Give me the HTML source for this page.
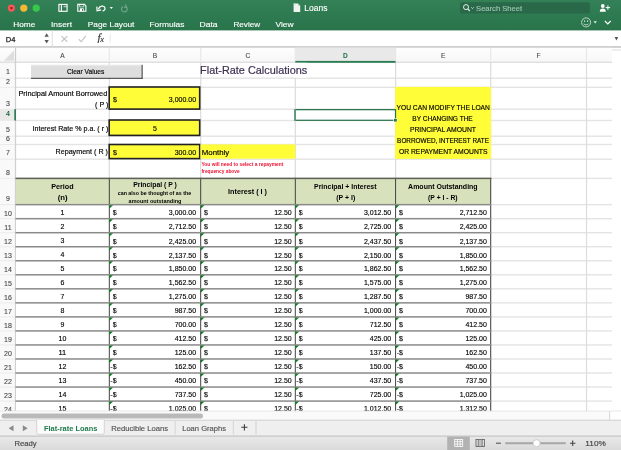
<!DOCTYPE html>
<html><head><meta charset="utf-8"><title>Loans</title>
<style>
html,body{margin:0;padding:0;background:#fff;}
body{width:621px;height:450px;overflow:hidden;}
svg{display:block;font-family:"Liberation Sans",sans-serif;will-change:transform;}
.s{font-family:"Liberation Serif",serif;font-style:italic;}
</style></head><body>
<svg width="621" height="450" viewBox="0 0 621 450">
<defs><linearGradient id="g" x1="0" y1="0" x2="0" y2="1"><stop offset="0" stop-color="#348057"/><stop offset=".55" stop-color="#2e7a50"/><stop offset="1" stop-color="#29744a"/></linearGradient>
<linearGradient id="h" x1="0" y1="0" x2="0" y2="1"><stop offset="0" stop-color="#fefefe"/><stop offset="1" stop-color="#f7f7f7"/></linearGradient><linearGradient id="sb" x1="0" y1="0" x2="0" y2="1"><stop offset="0" stop-color="#e9e9e9"/><stop offset="1" stop-color="#dadada"/></linearGradient></defs>
<rect width="621" height="450" fill="#fff"/>
<rect x="0.00" y="0.00" width="621.00" height="30.40" fill="url(#g)"/>
<circle cx="11.4" cy="8.1" r="3.65" fill="#f4575a"/>
<circle cx="23.8" cy="8.1" r="3.65" fill="#f6b737"/>
<circle cx="36.2" cy="8.1" r="3.65" fill="#36c84b"/>
<circle cx="11.4" cy="8.1" r="1.15" fill="#8b1411"/>
<g fill="none" stroke="#fff" stroke-width="1.1">
<rect x="58.9" y="4.4" width="8.2" height="6.9"/><path d="M61.4 4.4v6.9" /><path d="M63.6 6.5h3.5" stroke-width="1.6" stroke-opacity=".55"/>
<path d="M77.8 4.4h6.6l1.5 1.5v5.4h-8.1z"/><path d="M79.6 4.6v2.3h4.2v-2.3" stroke-width=".8" stroke-opacity=".8"/>
<path d="M98.4 9.2c1.2-3.6 5.6-4 6.5-1.3c.5 1.5-.6 2.8-2.2 3.1" stroke-width="1.3"/>
<path d="M96.8 6.6l.3 4.2l4-.9" stroke-width="1.2"/>
</g>
<rect x="79.9" y="8.3" width="3.8" height="3" fill="#fff"/><rect x="82" y="9" width="1" height="1.8" fill="#2f7d52"/>
<path d="M109.7 7h3.2l-1.6 2z" fill="#fff"/>
<g fill="none" stroke="#76aa90" stroke-width="1.05"><path d="M123 6.5a2.9 2.9 0 1 0 3 .2"/><path d="M125.4 4.4l1 2.4l-2.5.6"/></g>
<path d="M293.6 3.5h4.4l2.2 2.2v6.4h-6.6z" fill="#f1f3f1"/><path d="M293.6 3.5h2v1.2h-2z" fill="#bfe0b5"/><path d="M298 3.5v2.2h2.2z" fill="#a9c9b6"/>
<rect x="460" y="2.2" width="130" height="11.4" rx="2.2" fill="#29694a"/>
<circle cx="466" cy="7.1" r="2.5" fill="none" stroke="#e4eee8" stroke-width="1"/><path d="M467.8 9l2 2" stroke="#e4eee8" stroke-width="1.1"/>
<path d="M471.2 7.3l1.3 1.3l1.3-1.3" fill="none" stroke="#e4eee8" stroke-width=".8"/>
<circle cx="602.8" cy="6" r="1.9" fill="#fff"/><path d="M599.8 11.7c-.3-4.2 6.3-4.2 6 0z" fill="#fff"/><path d="M605.7 7.6h4.4M607.9 5.4v4.4" stroke="#fff" stroke-width="1"/>
<circle cx="586.1" cy="22.4" r="4.5" fill="none" stroke="#dfeae4" stroke-width=".8"/><rect x="584.1" y="20.4" width="1" height="1.5" fill="#dfeae4"/><rect x="587.1" y="20.4" width="1" height="1.5" fill="#dfeae4"/><path d="M583.7 23.8c1.2 1.4 3.6 1.4 4.8 0" fill="none" stroke="#dfeae4" stroke-width=".8"/>
<path d="M593.5 21.2h3.4l-1.7 2.2z" fill="#e6efe9"/>
<path d="M604.9 21l2.9 2.9l2.9-2.9" fill="none" stroke="#fff" stroke-width="1.2"/>
<text x="304.23" y="11.40" font-size="8.2" fill="#fff" stroke="#fff" stroke-width="0.12" textLength="23.2" lengthAdjust="spacingAndGlyphs">Loans</text>
<text x="476.07" y="10.80" font-size="7.6" fill="#9cc3ad" stroke="#9cc3ad" stroke-width="0.15" textLength="46.0" lengthAdjust="spacingAndGlyphs">Search Sheet</text>
<text x="13.23" y="26.80" font-size="8.1" fill="#fff" stroke="#fff" stroke-width="0.12" textLength="22.1" lengthAdjust="spacingAndGlyphs">Home</text>
<text x="50.93" y="26.80" font-size="8.1" fill="#fff" stroke="#fff" stroke-width="0.12" textLength="21.1" lengthAdjust="spacingAndGlyphs">Insert</text>
<text x="87.83" y="26.80" font-size="8.1" fill="#fff" stroke="#fff" stroke-width="0.12" textLength="46.6" lengthAdjust="spacingAndGlyphs">Page Layout</text>
<text x="149.43" y="26.80" font-size="8.1" fill="#fff" stroke="#fff" stroke-width="0.12" textLength="35.0" lengthAdjust="spacingAndGlyphs">Formulas</text>
<text x="199.43" y="26.80" font-size="8.1" fill="#fff" stroke="#fff" stroke-width="0.12" textLength="18.2" lengthAdjust="spacingAndGlyphs">Data</text>
<text x="233.43" y="26.80" font-size="8.1" fill="#fff" stroke="#fff" stroke-width="0.12" textLength="26.7" lengthAdjust="spacingAndGlyphs">Review</text>
<text x="275.43" y="26.80" font-size="8.1" fill="#fff" stroke="#fff" stroke-width="0.12" textLength="18.2" lengthAdjust="spacingAndGlyphs">View</text>
<rect x="0.00" y="46.15" width="621.00" height="1.70" fill="#c9c9c9"/>
<path d="M46.65 33.2l2.15 3.5h-4.3zM46.65 43.5l2.15-3.5h-4.3z" fill="#5a5a5a"/>
<rect x="51.70" y="30.60" width="1.00" height="15.60" fill="#dedede"/>
<rect x="109.70" y="34.20" width="1.00" height="8.20" fill="#e6e6e6"/>
<path d="M61.5 36.1l5.7 5.7M67.2 36.1l-5.7 5.7" stroke="#c6c6c6" stroke-width="1.25" fill="none"/>
<path d="M78.8 39.3l2.4 2.3l4.7-5.8" stroke="#c6c6c6" stroke-width="1.25" fill="none"/>
<path d="M614.6 37h3.6l-1.8 3.4z" fill="#505050"/>
<text x="5.87" y="42.00" font-size="7.6" fill="#222" stroke="#222" stroke-width="0.25" textLength="9.7" lengthAdjust="spacingAndGlyphs">D4</text>
<text x="97.4" y="41" font-size="11.4" fill="#3c3c3c" stroke="#3c3c3c" stroke-width=".2" class="s">f<tspan font-size="8.4" dx="-0.2" dy="0.5">x</tspan></text>
<rect x="0.00" y="47.80" width="612.00" height="14.00" fill="url(#h)"/>
<rect x="295.30" y="47.80" width="100.30" height="14.00" fill="#e9e9e9"/>
<rect x="612.00" y="49.50" width="9.00" height="1.00" fill="#dedede"/>
<path d="M14 50.6v10.2h-10.2z" fill="#dedede"/>
<rect x="0.00" y="62.70" width="15.00" height="348.30" fill="#f9f9f9"/>
<rect x="0.00" y="109.20" width="15.50" height="11.30" fill="#e9e9e9"/>
<rect x="0.00" y="61.70" width="612.00" height="1.00" fill="#d2d2d2"/>
<rect x="15.50" y="77.50" width="596.50" height="1.40" fill="#e4e4e4"/>
<rect x="0.00" y="77.70" width="15.50" height="1.00" fill="#ebebeb"/>
<rect x="15.50" y="86.60" width="596.50" height="1.40" fill="#e4e4e4"/>
<rect x="0.00" y="86.80" width="15.50" height="1.00" fill="#ebebeb"/>
<rect x="15.50" y="108.50" width="596.50" height="1.40" fill="#e4e4e4"/>
<rect x="0.00" y="108.70" width="15.50" height="1.00" fill="#ebebeb"/>
<rect x="15.50" y="119.80" width="596.50" height="1.40" fill="#e4e4e4"/>
<rect x="0.00" y="120.00" width="15.50" height="1.00" fill="#ebebeb"/>
<rect x="15.50" y="135.50" width="596.50" height="1.40" fill="#e4e4e4"/>
<rect x="0.00" y="135.70" width="15.50" height="1.00" fill="#ebebeb"/>
<rect x="15.50" y="143.80" width="596.50" height="1.40" fill="#e4e4e4"/>
<rect x="0.00" y="144.00" width="15.50" height="1.00" fill="#ebebeb"/>
<rect x="15.50" y="158.50" width="596.50" height="1.40" fill="#e4e4e4"/>
<rect x="0.00" y="158.70" width="15.50" height="1.00" fill="#ebebeb"/>
<rect x="15.50" y="177.70" width="596.50" height="1.40" fill="#e4e4e4"/>
<rect x="0.00" y="177.90" width="15.50" height="1.00" fill="#ebebeb"/>
<rect x="15.50" y="203.95" width="596.50" height="1.40" fill="#e4e4e4"/>
<rect x="0.00" y="204.15" width="15.50" height="1.00" fill="#ebebeb"/>
<rect x="15.50" y="217.98" width="596.50" height="1.40" fill="#e4e4e4"/>
<rect x="0.00" y="218.18" width="15.50" height="1.00" fill="#ebebeb"/>
<rect x="15.50" y="232.01" width="596.50" height="1.40" fill="#e4e4e4"/>
<rect x="0.00" y="232.21" width="15.50" height="1.00" fill="#ebebeb"/>
<rect x="15.50" y="246.04" width="596.50" height="1.40" fill="#e4e4e4"/>
<rect x="0.00" y="246.24" width="15.50" height="1.00" fill="#ebebeb"/>
<rect x="15.50" y="260.07" width="596.50" height="1.40" fill="#e4e4e4"/>
<rect x="0.00" y="260.27" width="15.50" height="1.00" fill="#ebebeb"/>
<rect x="15.50" y="274.10" width="596.50" height="1.40" fill="#e4e4e4"/>
<rect x="0.00" y="274.30" width="15.50" height="1.00" fill="#ebebeb"/>
<rect x="15.50" y="288.13" width="596.50" height="1.40" fill="#e4e4e4"/>
<rect x="0.00" y="288.33" width="15.50" height="1.00" fill="#ebebeb"/>
<rect x="15.50" y="302.16" width="596.50" height="1.40" fill="#e4e4e4"/>
<rect x="0.00" y="302.36" width="15.50" height="1.00" fill="#ebebeb"/>
<rect x="15.50" y="316.19" width="596.50" height="1.40" fill="#e4e4e4"/>
<rect x="0.00" y="316.39" width="15.50" height="1.00" fill="#ebebeb"/>
<rect x="15.50" y="330.22" width="596.50" height="1.40" fill="#e4e4e4"/>
<rect x="0.00" y="330.42" width="15.50" height="1.00" fill="#ebebeb"/>
<rect x="15.50" y="344.25" width="596.50" height="1.40" fill="#e4e4e4"/>
<rect x="0.00" y="344.45" width="15.50" height="1.00" fill="#ebebeb"/>
<rect x="15.50" y="358.28" width="596.50" height="1.40" fill="#e4e4e4"/>
<rect x="0.00" y="358.48" width="15.50" height="1.00" fill="#ebebeb"/>
<rect x="15.50" y="372.31" width="596.50" height="1.40" fill="#e4e4e4"/>
<rect x="0.00" y="372.51" width="15.50" height="1.00" fill="#ebebeb"/>
<rect x="15.50" y="386.34" width="596.50" height="1.40" fill="#e4e4e4"/>
<rect x="0.00" y="386.54" width="15.50" height="1.00" fill="#ebebeb"/>
<rect x="15.50" y="400.37" width="596.50" height="1.40" fill="#e4e4e4"/>
<rect x="0.00" y="400.57" width="15.50" height="1.00" fill="#ebebeb"/>
<rect x="15.50" y="414.40" width="596.50" height="1.40" fill="#e4e4e4"/>
<rect x="0.00" y="414.60" width="15.50" height="1.00" fill="#ebebeb"/>
<rect x="14.90" y="62.20" width="1.20" height="348.80" fill="#d0d0d0"/>
<rect x="14.90" y="47.80" width="1.20" height="14.40" fill="#cccccc"/>
<rect x="108.70" y="62.20" width="1.20" height="348.80" fill="#dcdcdc"/>
<rect x="108.70" y="47.80" width="1.20" height="14.40" fill="#e8e8e8"/>
<rect x="200.10" y="62.20" width="1.20" height="348.80" fill="#dcdcdc"/>
<rect x="200.10" y="47.80" width="1.20" height="14.40" fill="#e8e8e8"/>
<rect x="294.70" y="62.20" width="1.20" height="348.80" fill="#dcdcdc"/>
<rect x="294.70" y="47.80" width="1.20" height="14.40" fill="#e8e8e8"/>
<rect x="395.00" y="62.20" width="1.20" height="348.80" fill="#dcdcdc"/>
<rect x="395.00" y="47.80" width="1.20" height="14.40" fill="#e8e8e8"/>
<rect x="490.10" y="62.20" width="1.20" height="348.80" fill="#dcdcdc"/>
<rect x="490.10" y="47.80" width="1.20" height="14.40" fill="#e8e8e8"/>
<rect x="585.90" y="62.20" width="1.20" height="348.80" fill="#dcdcdc"/>
<rect x="585.90" y="47.80" width="1.20" height="14.40" fill="#e8e8e8"/>
<rect x="295.30" y="60.90" width="100.30" height="1.90" fill="#2e7d55"/>
<rect x="14.30" y="109.20" width="1.70" height="11.30" fill="#2e7d55"/>
<text x="62.40" y="58.00" font-size="6.6" fill="#4a4a4a" stroke="#4a4a4a" stroke-width="0.12" text-anchor="middle">A</text>
<text x="155.00" y="58.00" font-size="6.6" fill="#4a4a4a" stroke="#4a4a4a" stroke-width="0.12" text-anchor="middle">B</text>
<text x="248.00" y="58.00" font-size="6.6" fill="#4a4a4a" stroke="#4a4a4a" stroke-width="0.12" text-anchor="middle">C</text>
<text x="345.45" y="58.00" font-size="6.6" fill="#1f6f47" text-anchor="middle" font-weight="bold">D</text>
<text x="443.15" y="58.00" font-size="6.6" fill="#4a4a4a" stroke="#4a4a4a" stroke-width="0.12" text-anchor="middle">E</text>
<text x="538.60" y="58.00" font-size="6.6" fill="#4a4a4a" stroke="#4a4a4a" stroke-width="0.12" text-anchor="middle">F</text>
<text x="8.00" y="74.10" font-size="7.0" fill="#4a4a4a" stroke="#4a4a4a" stroke-width="0.12" text-anchor="middle">1</text>
<text x="8.00" y="83.50" font-size="7.0" fill="#4a4a4a" stroke="#4a4a4a" stroke-width="0.12" text-anchor="middle">2</text>
<text x="8.00" y="105.60" font-size="7.0" fill="#4a4a4a" stroke="#4a4a4a" stroke-width="0.12" text-anchor="middle">3</text>
<text x="8.00" y="115.80" font-size="7.0" fill="#1f6f47" text-anchor="middle" font-weight="bold">4</text>
<text x="8.00" y="131.70" font-size="7.0" fill="#4a4a4a" stroke="#4a4a4a" stroke-width="0.12" text-anchor="middle">5</text>
<text x="8.00" y="140.80" font-size="7.0" fill="#4a4a4a" stroke="#4a4a4a" stroke-width="0.12" text-anchor="middle">6</text>
<text x="8.00" y="154.50" font-size="7.0" fill="#4a4a4a" stroke="#4a4a4a" stroke-width="0.12" text-anchor="middle">7</text>
<text x="8.00" y="174.60" font-size="7.0" fill="#4a4a4a" stroke="#4a4a4a" stroke-width="0.12" text-anchor="middle">8</text>
<text x="8.00" y="201.30" font-size="7.0" fill="#4a4a4a" stroke="#4a4a4a" stroke-width="0.12" text-anchor="middle">9</text>
<text x="8.00" y="215.58" font-size="7.0" fill="#4a4a4a" stroke="#4a4a4a" stroke-width="0.12" text-anchor="middle">10</text>
<text x="8.00" y="229.61" font-size="7.0" fill="#4a4a4a" stroke="#4a4a4a" stroke-width="0.12" text-anchor="middle">11</text>
<text x="8.00" y="243.64" font-size="7.0" fill="#4a4a4a" stroke="#4a4a4a" stroke-width="0.12" text-anchor="middle">12</text>
<text x="8.00" y="257.67" font-size="7.0" fill="#4a4a4a" stroke="#4a4a4a" stroke-width="0.12" text-anchor="middle">13</text>
<text x="8.00" y="271.70" font-size="7.0" fill="#4a4a4a" stroke="#4a4a4a" stroke-width="0.12" text-anchor="middle">14</text>
<text x="8.00" y="285.73" font-size="7.0" fill="#4a4a4a" stroke="#4a4a4a" stroke-width="0.12" text-anchor="middle">15</text>
<text x="8.00" y="299.76" font-size="7.0" fill="#4a4a4a" stroke="#4a4a4a" stroke-width="0.12" text-anchor="middle">16</text>
<text x="8.00" y="313.79" font-size="7.0" fill="#4a4a4a" stroke="#4a4a4a" stroke-width="0.12" text-anchor="middle">17</text>
<text x="8.00" y="327.82" font-size="7.0" fill="#4a4a4a" stroke="#4a4a4a" stroke-width="0.12" text-anchor="middle">18</text>
<text x="8.00" y="341.85" font-size="7.0" fill="#4a4a4a" stroke="#4a4a4a" stroke-width="0.12" text-anchor="middle">19</text>
<text x="8.00" y="355.88" font-size="7.0" fill="#4a4a4a" stroke="#4a4a4a" stroke-width="0.12" text-anchor="middle">20</text>
<text x="8.00" y="369.91" font-size="7.0" fill="#4a4a4a" stroke="#4a4a4a" stroke-width="0.12" text-anchor="middle">21</text>
<text x="8.00" y="383.94" font-size="7.0" fill="#4a4a4a" stroke="#4a4a4a" stroke-width="0.12" text-anchor="middle">22</text>
<text x="8.00" y="397.97" font-size="7.0" fill="#4a4a4a" stroke="#4a4a4a" stroke-width="0.12" text-anchor="middle">23</text>
<text x="8.00" y="412.00" font-size="7.0" fill="#4a4a4a" stroke="#4a4a4a" stroke-width="0.12" text-anchor="middle">24</text>
<rect x="294.30" y="62.80" width="13.00" height="14.80" fill="#fff"/>
<text x="200.14" y="74.10" font-size="10.8" fill="#3f3153" stroke="#3f3153" stroke-width="0.2" textLength="107.1" lengthAdjust="spacingAndGlyphs">Flat-Rate Calculations</text>
<rect x="31.00" y="64.80" width="111.60" height="13.90" fill="#dedede"/>
<rect x="31.00" y="64.80" width="111.60" height="0.80" fill="#efefef"/>
<rect x="31.00" y="77.80" width="111.60" height="1.00" fill="#3c3c3c"/>
<rect x="141.60" y="64.80" width="1.00" height="14.00" fill="#3c3c3c"/>
<text x="66.92" y="74.20" font-size="6.9" fill="#111" stroke="#111" stroke-width="0.2" textLength="37.4" lengthAdjust="spacingAndGlyphs">Clear Values</text>
<text x="18.40" y="96.20" font-size="7.2" fill="#000" stroke="#000" stroke-width="0.15" textLength="88.9" lengthAdjust="spacingAndGlyphs">Principal Amount Borrowed</text>
<text x="95.10" y="107.00" font-size="7.2" fill="#000" stroke="#000" stroke-width="0.15" textLength="13.3" lengthAdjust="spacingAndGlyphs">( P )</text>
<text x="32.50" y="131.10" font-size="7.2" fill="#000" stroke="#000" stroke-width="0.15" textLength="75.9" lengthAdjust="spacingAndGlyphs">Interest Rate % p.a. ( r )</text>
<text x="55.50" y="154.30" font-size="7.2" fill="#000" stroke="#000" stroke-width="0.15" textLength="52.5" lengthAdjust="spacingAndGlyphs">Repayment ( R )</text>
<rect x="109.2" y="87.0" width="90.50" height="22.10" fill="#fffd38" stroke="#222" stroke-width="1.6"/>
<rect x="109.2" y="120.0" width="90.50" height="15.40" fill="#fffd38" stroke="#222" stroke-width="1.6"/>
<rect x="109.2" y="144.5" width="90.50" height="14.10" fill="#fffd38" stroke="#222" stroke-width="1.6"/>
<text x="113.00" y="102.30" font-size="8.1" fill="#000" stroke="#000" stroke-width="0.15" textLength="3.9" lengthAdjust="spacingAndGlyphs">$</text>
<text x="168.86" y="102.30" font-size="8.1" fill="#000" stroke="#000" stroke-width="0.15" textLength="27.2" lengthAdjust="spacingAndGlyphs">3,000.00</text>
<text x="153.05" y="131.40" font-size="8.1" fill="#000" stroke="#000" stroke-width="0.15" textLength="3.9" lengthAdjust="spacingAndGlyphs">5</text>
<text x="113.00" y="154.70" font-size="8.1" fill="#000" stroke="#000" stroke-width="0.15" textLength="3.9" lengthAdjust="spacingAndGlyphs">$</text>
<text x="174.69" y="154.70" font-size="8.1" fill="#000" stroke="#000" stroke-width="0.15" textLength="21.4" lengthAdjust="spacingAndGlyphs">300.00</text>
<rect x="200.50" y="144.40" width="94.90" height="14.30" fill="#fffd38"/>
<text x="201.80" y="154.70" font-size="7.2" fill="#000" stroke="#000" stroke-width="0.15" textLength="27.4" lengthAdjust="spacingAndGlyphs">Monthly</text>
<text x="201.45" y="165.90" font-size="5.0" fill="#ee1133" font-weight="bold" textLength="82.0" lengthAdjust="spacingAndGlyphs">You will need to select a repayment</text>
<text x="201.45" y="173.00" font-size="5.0" fill="#ee1133" font-weight="bold" textLength="38.2" lengthAdjust="spacingAndGlyphs">frequency above</text>
<rect x="395.10" y="86.90" width="95.90" height="72.00" fill="#fffd38"/>
<text x="396.52" y="110.10" font-size="6.8" fill="#000" stroke="#000" stroke-width="0.15" textLength="93.4" lengthAdjust="spacingAndGlyphs">YOU CAN MODIFY THE LOAN</text>
<text x="412.32" y="121.00" font-size="6.8" fill="#000" stroke="#000" stroke-width="0.15" textLength="60.4" lengthAdjust="spacingAndGlyphs">BY CHANGING THE</text>
<text x="409.92" y="131.90" font-size="6.8" fill="#000" stroke="#000" stroke-width="0.15" textLength="66.1" lengthAdjust="spacingAndGlyphs">PRINCIPAL AMOUNT</text>
<text x="397.12" y="142.80" font-size="6.8" fill="#000" stroke="#000" stroke-width="0.15" textLength="91.9" lengthAdjust="spacingAndGlyphs">BORROWED, INTEREST RATE</text>
<text x="398.92" y="153.60" font-size="6.8" fill="#000" stroke="#000" stroke-width="0.15" textLength="88.6" lengthAdjust="spacingAndGlyphs">OR REPAYMENT AMOUNTS</text>
<rect x="295.1" y="109.65" width="100.40" height="10.65" fill="#fff" stroke="#2b744d" stroke-width="1.25"/>
<rect x="294.30" y="109.10" width="1.70" height="11.90" fill="#5a987a"/>
<rect x="393.40" y="118.20" width="3.80" height="3.80" fill="#fff"/>
<rect x="394.00" y="118.80" width="2.80" height="2.80" fill="#2b744d"/>
<rect x="16.00" y="178.40" width="474.70" height="26.25" fill="#d7e2bc"/>
<rect x="16.00" y="204.65" width="474.70" height="206.35" fill="#fff"/>
<rect x="108.83" y="177.80" width="0.95" height="233.20" fill="#3a3a3a"/>
<rect x="200.22" y="177.80" width="0.95" height="233.20" fill="#3a3a3a"/>
<rect x="294.82" y="177.80" width="0.95" height="233.20" fill="#3a3a3a"/>
<rect x="395.12" y="177.80" width="0.95" height="233.20" fill="#3a3a3a"/>
<rect x="490.22" y="177.80" width="0.95" height="233.20" fill="#3a3a3a"/>
<rect x="15.50" y="177.65" width="475.85" height="1.50" fill="#5d6155"/>
<text x="51.20" y="189.30" font-size="7.1" fill="#000" font-weight="bold" textLength="22.4" lengthAdjust="spacingAndGlyphs">Period</text>
<text x="57.70" y="200.20" font-size="7.1" fill="#000" font-weight="bold" textLength="9.9" lengthAdjust="spacingAndGlyphs">(n)</text>
<text x="133.20" y="186.90" font-size="7.1" fill="#000" font-weight="bold" textLength="43.7" lengthAdjust="spacingAndGlyphs">Principal ( P )</text>
<text x="117.72" y="195.30" font-size="5.4" fill="#000" font-weight="bold" textLength="73.5" lengthAdjust="spacingAndGlyphs">can also be thought of as the</text>
<text x="128.62" y="203.10" font-size="5.4" fill="#000" font-weight="bold" textLength="52.8" lengthAdjust="spacingAndGlyphs">amount outstanding</text>
<text x="228.10" y="194.20" font-size="7.1" fill="#000" font-weight="bold" textLength="38.9" lengthAdjust="spacingAndGlyphs">Interest ( I )</text>
<text x="314.02" y="189.30" font-size="6.9" fill="#000" font-weight="bold" textLength="62.5" lengthAdjust="spacingAndGlyphs">Principal + Interest</text>
<text x="336.22" y="200.20" font-size="6.9" fill="#000" font-weight="bold" textLength="19.0" lengthAdjust="spacingAndGlyphs">(P + I)</text>
<text x="408.12" y="189.30" font-size="6.9" fill="#000" font-weight="bold" textLength="69.5" lengthAdjust="spacingAndGlyphs">Amount Outstanding</text>
<text x="428.12" y="200.20" font-size="6.9" fill="#000" font-weight="bold" textLength="29.5" lengthAdjust="spacingAndGlyphs">(P + I - R)</text>
<clipPath id="c"><rect x="0" y="47" width="612" height="364.0"/></clipPath><g clip-path="url(#c)">
<text x="60.45" y="215.25" font-size="8.1" fill="#000" stroke="#000" stroke-width="0.15" textLength="3.9" lengthAdjust="spacingAndGlyphs">1</text>
<text x="112.71" y="215.45" font-size="8.1" fill="#000" stroke="#000" stroke-width="0.15" textLength="3.9" lengthAdjust="spacingAndGlyphs">$</text>
<text x="168.86" y="215.45" font-size="8.1" fill="#000" stroke="#000" stroke-width="0.15" textLength="27.2" lengthAdjust="spacingAndGlyphs">3,000.00</text>
<text x="204.11" y="215.45" font-size="8.1" fill="#000" stroke="#000" stroke-width="0.15" textLength="3.9" lengthAdjust="spacingAndGlyphs">$</text>
<text x="274.19" y="215.45" font-size="8.1" fill="#000" stroke="#000" stroke-width="0.15" textLength="17.5" lengthAdjust="spacingAndGlyphs">12.50</text>
<text x="298.71" y="215.45" font-size="8.1" fill="#000" stroke="#000" stroke-width="0.15" textLength="3.9" lengthAdjust="spacingAndGlyphs">$</text>
<text x="363.96" y="215.45" font-size="8.1" fill="#000" stroke="#000" stroke-width="0.15" textLength="27.2" lengthAdjust="spacingAndGlyphs">3,012.50</text>
<text x="399.01" y="215.45" font-size="8.1" fill="#000" stroke="#000" stroke-width="0.15" textLength="3.9" lengthAdjust="spacingAndGlyphs">$</text>
<text x="459.66" y="215.45" font-size="8.1" fill="#000" stroke="#000" stroke-width="0.15" textLength="27.2" lengthAdjust="spacingAndGlyphs">2,712.50</text>
<text x="60.45" y="229.28" font-size="8.1" fill="#000" stroke="#000" stroke-width="0.15" textLength="3.9" lengthAdjust="spacingAndGlyphs">2</text>
<text x="112.71" y="229.48" font-size="8.1" fill="#000" stroke="#000" stroke-width="0.15" textLength="3.9" lengthAdjust="spacingAndGlyphs">$</text>
<text x="168.86" y="229.48" font-size="8.1" fill="#000" stroke="#000" stroke-width="0.15" textLength="27.2" lengthAdjust="spacingAndGlyphs">2,712.50</text>
<text x="204.11" y="229.48" font-size="8.1" fill="#000" stroke="#000" stroke-width="0.15" textLength="3.9" lengthAdjust="spacingAndGlyphs">$</text>
<text x="274.19" y="229.48" font-size="8.1" fill="#000" stroke="#000" stroke-width="0.15" textLength="17.5" lengthAdjust="spacingAndGlyphs">12.50</text>
<text x="298.71" y="229.48" font-size="8.1" fill="#000" stroke="#000" stroke-width="0.15" textLength="3.9" lengthAdjust="spacingAndGlyphs">$</text>
<text x="363.96" y="229.48" font-size="8.1" fill="#000" stroke="#000" stroke-width="0.15" textLength="27.2" lengthAdjust="spacingAndGlyphs">2,725.00</text>
<text x="399.01" y="229.48" font-size="8.1" fill="#000" stroke="#000" stroke-width="0.15" textLength="3.9" lengthAdjust="spacingAndGlyphs">$</text>
<text x="459.66" y="229.48" font-size="8.1" fill="#000" stroke="#000" stroke-width="0.15" textLength="27.2" lengthAdjust="spacingAndGlyphs">2,425.00</text>
<text x="60.45" y="243.31" font-size="8.1" fill="#000" stroke="#000" stroke-width="0.15" textLength="3.9" lengthAdjust="spacingAndGlyphs">3</text>
<text x="112.71" y="243.51" font-size="8.1" fill="#000" stroke="#000" stroke-width="0.15" textLength="3.9" lengthAdjust="spacingAndGlyphs">$</text>
<text x="168.86" y="243.51" font-size="8.1" fill="#000" stroke="#000" stroke-width="0.15" textLength="27.2" lengthAdjust="spacingAndGlyphs">2,425.00</text>
<text x="204.11" y="243.51" font-size="8.1" fill="#000" stroke="#000" stroke-width="0.15" textLength="3.9" lengthAdjust="spacingAndGlyphs">$</text>
<text x="274.19" y="243.51" font-size="8.1" fill="#000" stroke="#000" stroke-width="0.15" textLength="17.5" lengthAdjust="spacingAndGlyphs">12.50</text>
<text x="298.71" y="243.51" font-size="8.1" fill="#000" stroke="#000" stroke-width="0.15" textLength="3.9" lengthAdjust="spacingAndGlyphs">$</text>
<text x="363.96" y="243.51" font-size="8.1" fill="#000" stroke="#000" stroke-width="0.15" textLength="27.2" lengthAdjust="spacingAndGlyphs">2,437.50</text>
<text x="399.01" y="243.51" font-size="8.1" fill="#000" stroke="#000" stroke-width="0.15" textLength="3.9" lengthAdjust="spacingAndGlyphs">$</text>
<text x="459.66" y="243.51" font-size="8.1" fill="#000" stroke="#000" stroke-width="0.15" textLength="27.2" lengthAdjust="spacingAndGlyphs">2,137.50</text>
<text x="60.45" y="257.34" font-size="8.1" fill="#000" stroke="#000" stroke-width="0.15" textLength="3.9" lengthAdjust="spacingAndGlyphs">4</text>
<text x="112.71" y="257.54" font-size="8.1" fill="#000" stroke="#000" stroke-width="0.15" textLength="3.9" lengthAdjust="spacingAndGlyphs">$</text>
<text x="168.86" y="257.54" font-size="8.1" fill="#000" stroke="#000" stroke-width="0.15" textLength="27.2" lengthAdjust="spacingAndGlyphs">2,137.50</text>
<text x="204.11" y="257.54" font-size="8.1" fill="#000" stroke="#000" stroke-width="0.15" textLength="3.9" lengthAdjust="spacingAndGlyphs">$</text>
<text x="274.19" y="257.54" font-size="8.1" fill="#000" stroke="#000" stroke-width="0.15" textLength="17.5" lengthAdjust="spacingAndGlyphs">12.50</text>
<text x="298.71" y="257.54" font-size="8.1" fill="#000" stroke="#000" stroke-width="0.15" textLength="3.9" lengthAdjust="spacingAndGlyphs">$</text>
<text x="363.96" y="257.54" font-size="8.1" fill="#000" stroke="#000" stroke-width="0.15" textLength="27.2" lengthAdjust="spacingAndGlyphs">2,150.00</text>
<text x="399.01" y="257.54" font-size="8.1" fill="#000" stroke="#000" stroke-width="0.15" textLength="3.9" lengthAdjust="spacingAndGlyphs">$</text>
<text x="459.66" y="257.54" font-size="8.1" fill="#000" stroke="#000" stroke-width="0.15" textLength="27.2" lengthAdjust="spacingAndGlyphs">1,850.00</text>
<text x="60.45" y="270.67" font-size="8.1" fill="#000" stroke="#000" stroke-width="0.15" textLength="3.9" lengthAdjust="spacingAndGlyphs">5</text>
<text x="112.71" y="271.17" font-size="8.1" fill="#000" stroke="#000" stroke-width="0.15" textLength="3.9" lengthAdjust="spacingAndGlyphs">$</text>
<text x="168.86" y="271.17" font-size="8.1" fill="#000" stroke="#000" stroke-width="0.15" textLength="27.2" lengthAdjust="spacingAndGlyphs">1,850.00</text>
<text x="204.11" y="271.17" font-size="8.1" fill="#000" stroke="#000" stroke-width="0.15" textLength="3.9" lengthAdjust="spacingAndGlyphs">$</text>
<text x="274.19" y="271.17" font-size="8.1" fill="#000" stroke="#000" stroke-width="0.15" textLength="17.5" lengthAdjust="spacingAndGlyphs">12.50</text>
<text x="298.71" y="271.17" font-size="8.1" fill="#000" stroke="#000" stroke-width="0.15" textLength="3.9" lengthAdjust="spacingAndGlyphs">$</text>
<text x="363.96" y="271.17" font-size="8.1" fill="#000" stroke="#000" stroke-width="0.15" textLength="27.2" lengthAdjust="spacingAndGlyphs">1,862.50</text>
<text x="399.01" y="271.17" font-size="8.1" fill="#000" stroke="#000" stroke-width="0.15" textLength="3.9" lengthAdjust="spacingAndGlyphs">$</text>
<text x="459.66" y="271.17" font-size="8.1" fill="#000" stroke="#000" stroke-width="0.15" textLength="27.2" lengthAdjust="spacingAndGlyphs">1,562.50</text>
<text x="60.45" y="284.70" font-size="8.1" fill="#000" stroke="#000" stroke-width="0.15" textLength="3.9" lengthAdjust="spacingAndGlyphs">6</text>
<text x="112.71" y="285.20" font-size="8.1" fill="#000" stroke="#000" stroke-width="0.15" textLength="3.9" lengthAdjust="spacingAndGlyphs">$</text>
<text x="168.86" y="285.20" font-size="8.1" fill="#000" stroke="#000" stroke-width="0.15" textLength="27.2" lengthAdjust="spacingAndGlyphs">1,562.50</text>
<text x="204.11" y="285.20" font-size="8.1" fill="#000" stroke="#000" stroke-width="0.15" textLength="3.9" lengthAdjust="spacingAndGlyphs">$</text>
<text x="274.19" y="285.20" font-size="8.1" fill="#000" stroke="#000" stroke-width="0.15" textLength="17.5" lengthAdjust="spacingAndGlyphs">12.50</text>
<text x="298.71" y="285.20" font-size="8.1" fill="#000" stroke="#000" stroke-width="0.15" textLength="3.9" lengthAdjust="spacingAndGlyphs">$</text>
<text x="363.96" y="285.20" font-size="8.1" fill="#000" stroke="#000" stroke-width="0.15" textLength="27.2" lengthAdjust="spacingAndGlyphs">1,575.00</text>
<text x="399.01" y="285.20" font-size="8.1" fill="#000" stroke="#000" stroke-width="0.15" textLength="3.9" lengthAdjust="spacingAndGlyphs">$</text>
<text x="459.66" y="285.20" font-size="8.1" fill="#000" stroke="#000" stroke-width="0.15" textLength="27.2" lengthAdjust="spacingAndGlyphs">1,275.00</text>
<text x="60.45" y="298.73" font-size="8.1" fill="#000" stroke="#000" stroke-width="0.15" textLength="3.9" lengthAdjust="spacingAndGlyphs">7</text>
<text x="112.71" y="299.23" font-size="8.1" fill="#000" stroke="#000" stroke-width="0.15" textLength="3.9" lengthAdjust="spacingAndGlyphs">$</text>
<text x="168.86" y="299.23" font-size="8.1" fill="#000" stroke="#000" stroke-width="0.15" textLength="27.2" lengthAdjust="spacingAndGlyphs">1,275.00</text>
<text x="204.11" y="299.23" font-size="8.1" fill="#000" stroke="#000" stroke-width="0.15" textLength="3.9" lengthAdjust="spacingAndGlyphs">$</text>
<text x="274.19" y="299.23" font-size="8.1" fill="#000" stroke="#000" stroke-width="0.15" textLength="17.5" lengthAdjust="spacingAndGlyphs">12.50</text>
<text x="298.71" y="299.23" font-size="8.1" fill="#000" stroke="#000" stroke-width="0.15" textLength="3.9" lengthAdjust="spacingAndGlyphs">$</text>
<text x="363.96" y="299.23" font-size="8.1" fill="#000" stroke="#000" stroke-width="0.15" textLength="27.2" lengthAdjust="spacingAndGlyphs">1,287.50</text>
<text x="399.01" y="299.23" font-size="8.1" fill="#000" stroke="#000" stroke-width="0.15" textLength="3.9" lengthAdjust="spacingAndGlyphs">$</text>
<text x="465.49" y="299.23" font-size="8.1" fill="#000" stroke="#000" stroke-width="0.15" textLength="21.4" lengthAdjust="spacingAndGlyphs">987.50</text>
<text x="60.45" y="312.76" font-size="8.1" fill="#000" stroke="#000" stroke-width="0.15" textLength="3.9" lengthAdjust="spacingAndGlyphs">8</text>
<text x="112.71" y="313.26" font-size="8.1" fill="#000" stroke="#000" stroke-width="0.15" textLength="3.9" lengthAdjust="spacingAndGlyphs">$</text>
<text x="174.69" y="313.26" font-size="8.1" fill="#000" stroke="#000" stroke-width="0.15" textLength="21.4" lengthAdjust="spacingAndGlyphs">987.50</text>
<text x="204.11" y="313.26" font-size="8.1" fill="#000" stroke="#000" stroke-width="0.15" textLength="3.9" lengthAdjust="spacingAndGlyphs">$</text>
<text x="274.19" y="313.26" font-size="8.1" fill="#000" stroke="#000" stroke-width="0.15" textLength="17.5" lengthAdjust="spacingAndGlyphs">12.50</text>
<text x="298.71" y="313.26" font-size="8.1" fill="#000" stroke="#000" stroke-width="0.15" textLength="3.9" lengthAdjust="spacingAndGlyphs">$</text>
<text x="363.96" y="313.26" font-size="8.1" fill="#000" stroke="#000" stroke-width="0.15" textLength="27.2" lengthAdjust="spacingAndGlyphs">1,000.00</text>
<text x="399.01" y="313.26" font-size="8.1" fill="#000" stroke="#000" stroke-width="0.15" textLength="3.9" lengthAdjust="spacingAndGlyphs">$</text>
<text x="465.49" y="313.26" font-size="8.1" fill="#000" stroke="#000" stroke-width="0.15" textLength="21.4" lengthAdjust="spacingAndGlyphs">700.00</text>
<text x="60.45" y="326.79" font-size="8.1" fill="#000" stroke="#000" stroke-width="0.15" textLength="3.9" lengthAdjust="spacingAndGlyphs">9</text>
<text x="112.71" y="327.29" font-size="8.1" fill="#000" stroke="#000" stroke-width="0.15" textLength="3.9" lengthAdjust="spacingAndGlyphs">$</text>
<text x="174.69" y="327.29" font-size="8.1" fill="#000" stroke="#000" stroke-width="0.15" textLength="21.4" lengthAdjust="spacingAndGlyphs">700.00</text>
<text x="204.11" y="327.29" font-size="8.1" fill="#000" stroke="#000" stroke-width="0.15" textLength="3.9" lengthAdjust="spacingAndGlyphs">$</text>
<text x="274.19" y="327.29" font-size="8.1" fill="#000" stroke="#000" stroke-width="0.15" textLength="17.5" lengthAdjust="spacingAndGlyphs">12.50</text>
<text x="298.71" y="327.29" font-size="8.1" fill="#000" stroke="#000" stroke-width="0.15" textLength="3.9" lengthAdjust="spacingAndGlyphs">$</text>
<text x="369.79" y="327.29" font-size="8.1" fill="#000" stroke="#000" stroke-width="0.15" textLength="21.4" lengthAdjust="spacingAndGlyphs">712.50</text>
<text x="399.01" y="327.29" font-size="8.1" fill="#000" stroke="#000" stroke-width="0.15" textLength="3.9" lengthAdjust="spacingAndGlyphs">$</text>
<text x="465.49" y="327.29" font-size="8.1" fill="#000" stroke="#000" stroke-width="0.15" textLength="21.4" lengthAdjust="spacingAndGlyphs">412.50</text>
<text x="58.51" y="340.82" font-size="8.1" fill="#000" stroke="#000" stroke-width="0.15" textLength="7.8" lengthAdjust="spacingAndGlyphs">10</text>
<text x="112.71" y="341.32" font-size="8.1" fill="#000" stroke="#000" stroke-width="0.15" textLength="3.9" lengthAdjust="spacingAndGlyphs">$</text>
<text x="174.69" y="341.32" font-size="8.1" fill="#000" stroke="#000" stroke-width="0.15" textLength="21.4" lengthAdjust="spacingAndGlyphs">412.50</text>
<text x="204.11" y="341.32" font-size="8.1" fill="#000" stroke="#000" stroke-width="0.15" textLength="3.9" lengthAdjust="spacingAndGlyphs">$</text>
<text x="274.19" y="341.32" font-size="8.1" fill="#000" stroke="#000" stroke-width="0.15" textLength="17.5" lengthAdjust="spacingAndGlyphs">12.50</text>
<text x="298.71" y="341.32" font-size="8.1" fill="#000" stroke="#000" stroke-width="0.15" textLength="3.9" lengthAdjust="spacingAndGlyphs">$</text>
<text x="369.79" y="341.32" font-size="8.1" fill="#000" stroke="#000" stroke-width="0.15" textLength="21.4" lengthAdjust="spacingAndGlyphs">425.00</text>
<text x="399.01" y="341.32" font-size="8.1" fill="#000" stroke="#000" stroke-width="0.15" textLength="3.9" lengthAdjust="spacingAndGlyphs">$</text>
<text x="465.49" y="341.32" font-size="8.1" fill="#000" stroke="#000" stroke-width="0.15" textLength="21.4" lengthAdjust="spacingAndGlyphs">125.00</text>
<text x="58.51" y="354.85" font-size="8.1" fill="#000" stroke="#000" stroke-width="0.15" textLength="7.8" lengthAdjust="spacingAndGlyphs">11</text>
<text x="112.71" y="355.35" font-size="8.1" fill="#000" stroke="#000" stroke-width="0.15" textLength="3.9" lengthAdjust="spacingAndGlyphs">$</text>
<text x="174.69" y="355.35" font-size="8.1" fill="#000" stroke="#000" stroke-width="0.15" textLength="21.4" lengthAdjust="spacingAndGlyphs">125.00</text>
<text x="204.11" y="355.35" font-size="8.1" fill="#000" stroke="#000" stroke-width="0.15" textLength="3.9" lengthAdjust="spacingAndGlyphs">$</text>
<text x="274.19" y="355.35" font-size="8.1" fill="#000" stroke="#000" stroke-width="0.15" textLength="17.5" lengthAdjust="spacingAndGlyphs">12.50</text>
<text x="298.71" y="355.35" font-size="8.1" fill="#000" stroke="#000" stroke-width="0.15" textLength="3.9" lengthAdjust="spacingAndGlyphs">$</text>
<text x="369.79" y="355.35" font-size="8.1" fill="#000" stroke="#000" stroke-width="0.15" textLength="21.4" lengthAdjust="spacingAndGlyphs">137.50</text>
<text x="396.67" y="355.35" font-size="8.1" fill="#000" stroke="#000" stroke-width="0.15" textLength="6.2" lengthAdjust="spacingAndGlyphs">-$</text>
<text x="465.49" y="355.35" font-size="8.1" fill="#000" stroke="#000" stroke-width="0.15" textLength="21.4" lengthAdjust="spacingAndGlyphs">162.50</text>
<text x="58.51" y="368.88" font-size="8.1" fill="#000" stroke="#000" stroke-width="0.15" textLength="7.8" lengthAdjust="spacingAndGlyphs">12</text>
<text x="110.37" y="369.38" font-size="8.1" fill="#000" stroke="#000" stroke-width="0.15" textLength="6.2" lengthAdjust="spacingAndGlyphs">-$</text>
<text x="174.69" y="369.38" font-size="8.1" fill="#000" stroke="#000" stroke-width="0.15" textLength="21.4" lengthAdjust="spacingAndGlyphs">162.50</text>
<text x="204.11" y="369.38" font-size="8.1" fill="#000" stroke="#000" stroke-width="0.15" textLength="3.9" lengthAdjust="spacingAndGlyphs">$</text>
<text x="274.19" y="369.38" font-size="8.1" fill="#000" stroke="#000" stroke-width="0.15" textLength="17.5" lengthAdjust="spacingAndGlyphs">12.50</text>
<text x="296.37" y="369.38" font-size="8.1" fill="#000" stroke="#000" stroke-width="0.15" textLength="6.2" lengthAdjust="spacingAndGlyphs">-$</text>
<text x="369.79" y="369.38" font-size="8.1" fill="#000" stroke="#000" stroke-width="0.15" textLength="21.4" lengthAdjust="spacingAndGlyphs">150.00</text>
<text x="396.67" y="369.38" font-size="8.1" fill="#000" stroke="#000" stroke-width="0.15" textLength="6.2" lengthAdjust="spacingAndGlyphs">-$</text>
<text x="465.49" y="369.38" font-size="8.1" fill="#000" stroke="#000" stroke-width="0.15" textLength="21.4" lengthAdjust="spacingAndGlyphs">450.00</text>
<text x="58.51" y="382.91" font-size="8.1" fill="#000" stroke="#000" stroke-width="0.15" textLength="7.8" lengthAdjust="spacingAndGlyphs">13</text>
<text x="110.37" y="383.41" font-size="8.1" fill="#000" stroke="#000" stroke-width="0.15" textLength="6.2" lengthAdjust="spacingAndGlyphs">-$</text>
<text x="174.69" y="383.41" font-size="8.1" fill="#000" stroke="#000" stroke-width="0.15" textLength="21.4" lengthAdjust="spacingAndGlyphs">450.00</text>
<text x="204.11" y="383.41" font-size="8.1" fill="#000" stroke="#000" stroke-width="0.15" textLength="3.9" lengthAdjust="spacingAndGlyphs">$</text>
<text x="274.19" y="383.41" font-size="8.1" fill="#000" stroke="#000" stroke-width="0.15" textLength="17.5" lengthAdjust="spacingAndGlyphs">12.50</text>
<text x="296.37" y="383.41" font-size="8.1" fill="#000" stroke="#000" stroke-width="0.15" textLength="6.2" lengthAdjust="spacingAndGlyphs">-$</text>
<text x="369.79" y="383.41" font-size="8.1" fill="#000" stroke="#000" stroke-width="0.15" textLength="21.4" lengthAdjust="spacingAndGlyphs">437.50</text>
<text x="396.67" y="383.41" font-size="8.1" fill="#000" stroke="#000" stroke-width="0.15" textLength="6.2" lengthAdjust="spacingAndGlyphs">-$</text>
<text x="465.49" y="383.41" font-size="8.1" fill="#000" stroke="#000" stroke-width="0.15" textLength="21.4" lengthAdjust="spacingAndGlyphs">737.50</text>
<text x="58.51" y="396.94" font-size="8.1" fill="#000" stroke="#000" stroke-width="0.15" textLength="7.8" lengthAdjust="spacingAndGlyphs">14</text>
<text x="110.37" y="397.44" font-size="8.1" fill="#000" stroke="#000" stroke-width="0.15" textLength="6.2" lengthAdjust="spacingAndGlyphs">-$</text>
<text x="174.69" y="397.44" font-size="8.1" fill="#000" stroke="#000" stroke-width="0.15" textLength="21.4" lengthAdjust="spacingAndGlyphs">737.50</text>
<text x="204.11" y="397.44" font-size="8.1" fill="#000" stroke="#000" stroke-width="0.15" textLength="3.9" lengthAdjust="spacingAndGlyphs">$</text>
<text x="274.19" y="397.44" font-size="8.1" fill="#000" stroke="#000" stroke-width="0.15" textLength="17.5" lengthAdjust="spacingAndGlyphs">12.50</text>
<text x="296.37" y="397.44" font-size="8.1" fill="#000" stroke="#000" stroke-width="0.15" textLength="6.2" lengthAdjust="spacingAndGlyphs">-$</text>
<text x="369.79" y="397.44" font-size="8.1" fill="#000" stroke="#000" stroke-width="0.15" textLength="21.4" lengthAdjust="spacingAndGlyphs">725.00</text>
<text x="396.67" y="397.44" font-size="8.1" fill="#000" stroke="#000" stroke-width="0.15" textLength="6.2" lengthAdjust="spacingAndGlyphs">-$</text>
<text x="459.66" y="397.44" font-size="8.1" fill="#000" stroke="#000" stroke-width="0.15" textLength="27.2" lengthAdjust="spacingAndGlyphs">1,025.00</text>
<text x="58.51" y="410.97" font-size="8.1" fill="#000" stroke="#000" stroke-width="0.15" textLength="7.8" lengthAdjust="spacingAndGlyphs">15</text>
<text x="110.37" y="411.47" font-size="8.1" fill="#000" stroke="#000" stroke-width="0.15" textLength="6.2" lengthAdjust="spacingAndGlyphs">-$</text>
<text x="168.86" y="411.47" font-size="8.1" fill="#000" stroke="#000" stroke-width="0.15" textLength="27.2" lengthAdjust="spacingAndGlyphs">1,025.00</text>
<text x="204.11" y="411.47" font-size="8.1" fill="#000" stroke="#000" stroke-width="0.15" textLength="3.9" lengthAdjust="spacingAndGlyphs">$</text>
<text x="274.19" y="411.47" font-size="8.1" fill="#000" stroke="#000" stroke-width="0.15" textLength="17.5" lengthAdjust="spacingAndGlyphs">12.50</text>
<text x="296.37" y="411.47" font-size="8.1" fill="#000" stroke="#000" stroke-width="0.15" textLength="6.2" lengthAdjust="spacingAndGlyphs">-$</text>
<text x="363.96" y="411.47" font-size="8.1" fill="#000" stroke="#000" stroke-width="0.15" textLength="27.2" lengthAdjust="spacingAndGlyphs">1,012.50</text>
<text x="396.67" y="411.47" font-size="8.1" fill="#000" stroke="#000" stroke-width="0.15" textLength="6.2" lengthAdjust="spacingAndGlyphs">-$</text>
<text x="459.66" y="411.47" font-size="8.1" fill="#000" stroke="#000" stroke-width="0.15" textLength="27.2" lengthAdjust="spacingAndGlyphs">1,312.50</text>
</g>
<rect x="15.50" y="203.90" width="475.70" height="1.50" fill="#8a8a8a"/>
<rect x="15.50" y="217.93" width="475.70" height="1.50" fill="#8a8a8a"/>
<rect x="15.50" y="231.96" width="475.70" height="1.50" fill="#8a8a8a"/>
<rect x="15.50" y="245.99" width="475.70" height="1.50" fill="#8a8a8a"/>
<rect x="15.50" y="260.02" width="475.70" height="1.50" fill="#8a8a8a"/>
<rect x="15.50" y="274.05" width="475.70" height="1.50" fill="#8a8a8a"/>
<rect x="15.50" y="288.08" width="475.70" height="1.50" fill="#8a8a8a"/>
<rect x="15.50" y="302.11" width="475.70" height="1.50" fill="#8a8a8a"/>
<rect x="15.50" y="316.14" width="475.70" height="1.50" fill="#8a8a8a"/>
<rect x="15.50" y="330.17" width="475.70" height="1.50" fill="#8a8a8a"/>
<rect x="15.50" y="344.20" width="475.70" height="1.50" fill="#8a8a8a"/>
<rect x="15.50" y="358.23" width="475.70" height="1.50" fill="#8a8a8a"/>
<rect x="15.50" y="372.26" width="475.70" height="1.50" fill="#8a8a8a"/>
<rect x="15.50" y="386.29" width="475.70" height="1.50" fill="#8a8a8a"/>
<rect x="15.50" y="400.32" width="475.70" height="1.50" fill="#8a8a8a"/>
<g clip-path="url(#c)"><path d="M109.20 205.15h3.9l-3.9 3.5z" fill="#0f7a22"/><path d="M200.60 205.15h3.9l-3.9 3.5z" fill="#0f7a22"/><path d="M295.20 205.15h3.9l-3.9 3.5z" fill="#0f7a22"/><path d="M395.50 205.15h3.9l-3.9 3.5z" fill="#0f7a22"/><path d="M109.20 219.18h3.9l-3.9 3.5z" fill="#0f7a22"/><path d="M200.60 219.18h3.9l-3.9 3.5z" fill="#0f7a22"/><path d="M295.20 219.18h3.9l-3.9 3.5z" fill="#0f7a22"/><path d="M395.50 219.18h3.9l-3.9 3.5z" fill="#0f7a22"/><path d="M109.20 233.21h3.9l-3.9 3.5z" fill="#0f7a22"/><path d="M200.60 233.21h3.9l-3.9 3.5z" fill="#0f7a22"/><path d="M295.20 233.21h3.9l-3.9 3.5z" fill="#0f7a22"/><path d="M395.50 233.21h3.9l-3.9 3.5z" fill="#0f7a22"/><path d="M109.20 247.24h3.9l-3.9 3.5z" fill="#0f7a22"/><path d="M200.60 247.24h3.9l-3.9 3.5z" fill="#0f7a22"/><path d="M295.20 247.24h3.9l-3.9 3.5z" fill="#0f7a22"/><path d="M395.50 247.24h3.9l-3.9 3.5z" fill="#0f7a22"/><path d="M109.20 261.27h3.9l-3.9 3.5z" fill="#0f7a22"/><path d="M200.60 261.27h3.9l-3.9 3.5z" fill="#0f7a22"/><path d="M295.20 261.27h3.9l-3.9 3.5z" fill="#0f7a22"/><path d="M395.50 261.27h3.9l-3.9 3.5z" fill="#0f7a22"/><path d="M109.20 275.30h3.9l-3.9 3.5z" fill="#0f7a22"/><path d="M200.60 275.30h3.9l-3.9 3.5z" fill="#0f7a22"/><path d="M295.20 275.30h3.9l-3.9 3.5z" fill="#0f7a22"/><path d="M395.50 275.30h3.9l-3.9 3.5z" fill="#0f7a22"/><path d="M109.20 289.33h3.9l-3.9 3.5z" fill="#0f7a22"/><path d="M200.60 289.33h3.9l-3.9 3.5z" fill="#0f7a22"/><path d="M295.20 289.33h3.9l-3.9 3.5z" fill="#0f7a22"/><path d="M395.50 289.33h3.9l-3.9 3.5z" fill="#0f7a22"/><path d="M109.20 303.36h3.9l-3.9 3.5z" fill="#0f7a22"/><path d="M200.60 303.36h3.9l-3.9 3.5z" fill="#0f7a22"/><path d="M295.20 303.36h3.9l-3.9 3.5z" fill="#0f7a22"/><path d="M395.50 303.36h3.9l-3.9 3.5z" fill="#0f7a22"/><path d="M109.20 317.39h3.9l-3.9 3.5z" fill="#0f7a22"/><path d="M200.60 317.39h3.9l-3.9 3.5z" fill="#0f7a22"/><path d="M295.20 317.39h3.9l-3.9 3.5z" fill="#0f7a22"/><path d="M395.50 317.39h3.9l-3.9 3.5z" fill="#0f7a22"/><path d="M109.20 331.42h3.9l-3.9 3.5z" fill="#0f7a22"/><path d="M200.60 331.42h3.9l-3.9 3.5z" fill="#0f7a22"/><path d="M295.20 331.42h3.9l-3.9 3.5z" fill="#0f7a22"/><path d="M395.50 331.42h3.9l-3.9 3.5z" fill="#0f7a22"/><path d="M109.20 345.45h3.9l-3.9 3.5z" fill="#0f7a22"/><path d="M200.60 345.45h3.9l-3.9 3.5z" fill="#0f7a22"/><path d="M295.20 345.45h3.9l-3.9 3.5z" fill="#0f7a22"/><path d="M395.50 345.45h3.9l-3.9 3.5z" fill="#0f7a22"/><path d="M109.20 359.48h3.9l-3.9 3.5z" fill="#0f7a22"/><path d="M200.60 359.48h3.9l-3.9 3.5z" fill="#0f7a22"/><path d="M295.20 359.48h3.9l-3.9 3.5z" fill="#0f7a22"/><path d="M395.50 359.48h3.9l-3.9 3.5z" fill="#0f7a22"/><path d="M109.20 373.51h3.9l-3.9 3.5z" fill="#0f7a22"/><path d="M200.60 373.51h3.9l-3.9 3.5z" fill="#0f7a22"/><path d="M295.20 373.51h3.9l-3.9 3.5z" fill="#0f7a22"/><path d="M395.50 373.51h3.9l-3.9 3.5z" fill="#0f7a22"/><path d="M109.20 387.54h3.9l-3.9 3.5z" fill="#0f7a22"/><path d="M200.60 387.54h3.9l-3.9 3.5z" fill="#0f7a22"/><path d="M295.20 387.54h3.9l-3.9 3.5z" fill="#0f7a22"/><path d="M395.50 387.54h3.9l-3.9 3.5z" fill="#0f7a22"/><path d="M109.20 401.57h3.9l-3.9 3.5z" fill="#0f7a22"/><path d="M200.60 401.57h3.9l-3.9 3.5z" fill="#0f7a22"/><path d="M295.20 401.57h3.9l-3.9 3.5z" fill="#0f7a22"/><path d="M395.50 401.57h3.9l-3.9 3.5z" fill="#0f7a22"/></g>
<rect x="0.00" y="411.00" width="621.00" height="39.00" fill="#efefef"/>
<rect x="612.00" y="47.90" width="9.00" height="363.10" fill="#fff"/>
<rect x="612.00" y="49.50" width="9.00" height="1.00" fill="#dedede"/>
<rect x="0.00" y="411.00" width="609.60" height="8.80" fill="#fafafa"/>
<rect x="609.60" y="411.00" width="11.40" height="8.80" fill="#fff"/>
<rect x="0.00" y="410.60" width="621.00" height="0.80" fill="#e2e2e2"/>
<rect x="609.10" y="411.00" width="1.00" height="9.00" fill="#d9d9d9"/>
<rect x="1.5" y="413.6" width="201.5" height="5" rx="2.5" fill="#b9b9b9"/>
<rect x="0.00" y="420.00" width="621.00" height="16.20" fill="#efefef"/>
<rect x="0.00" y="419.70" width="621.00" height="1.00" fill="#d2d2d2"/>
<path d="M36.7 420v12.5q0 1.8 1.8 1.8h64q1.8 0 1.8-1.8v-12.5z" fill="#fbfbfb" stroke="#cfcfcf" stroke-width=".9"/>
<rect x="37.20" y="419.80" width="66.60" height="1.20" fill="#fbfbfb"/>
<path d="M13.5 425.2v6l-4.9-3zM22.8 425.2v6l4.9-3z" fill="#8a8a8a"/>
<rect x="174.70" y="421.00" width="1.00" height="13.50" fill="#d4d4d4"/>
<rect x="232.80" y="421.00" width="1.00" height="13.50" fill="#d4d4d4"/>
<rect x="255.50" y="421.00" width="1.00" height="13.50" fill="#d4d4d4"/>
<path d="M241.3 427.3h6.2M244.4 424.2v6.2" stroke="#3d3d3d" stroke-width="1.1"/>
<text x="43.88" y="430.50" font-size="7.5" fill="#1e7b4b" font-weight="bold" textLength="53.5" lengthAdjust="spacingAndGlyphs">Flat-rate Loans</text>
<text x="111.17" y="430.50" font-size="7.5" fill="#555" stroke="#555" stroke-width="0.15" textLength="56.9" lengthAdjust="spacingAndGlyphs">Reducible Loans</text>
<text x="182.17" y="430.50" font-size="7.5" fill="#555" stroke="#555" stroke-width="0.15" textLength="43.9" lengthAdjust="spacingAndGlyphs">Loan Graphs</text>
<rect x="0.00" y="436.00" width="621.00" height="14.00" fill="url(#sb)"/>
<rect x="0.00" y="435.55" width="621.00" height="1.10" fill="#c2c2c2"/>
<text x="14.47" y="445.70" font-size="7.6" fill="#444" stroke="#444" stroke-width="0.15" textLength="22.2" lengthAdjust="spacingAndGlyphs">Ready</text>
<rect x="447.20" y="436.60" width="22.60" height="13.40" fill="#b2b2b2"/>
<g fill="none" stroke="#fff" stroke-width=".8"><rect x="454.7" y="439.4" width="8" height="7"/><path d="M457.4 439.4v7M460.1 439.4v7M454.7 441.7h8M454.7 444.1h8"/></g>
<g fill="none" stroke="#666" stroke-width=".9"><rect x="476" y="439.5" width="8.4" height="7"/><path d="M478.3 439.5v7M482.1 439.5v7"/></g>
<rect x="478.3" y="439.5" width="3.8" height="7" fill="#999" fill-opacity=".45"/>
<path d="M496 443.2h4.9" stroke="#555" stroke-width="1.1"/>
<path d="M506 443.2h59" stroke="#a6a6a6" stroke-width="1.9" stroke-linecap="round"/>
<circle cx="536.6" cy="443.2" r="3.5" fill="#fff" stroke="#b9b9b9" stroke-width=".6"/>
<path d="M570 443.3h5.4M572.7 440.6v5.4" stroke="#444" stroke-width="1.1"/>
<text x="585.36" y="445.80" font-size="7.7" fill="#444" stroke="#444" stroke-width="0.15" textLength="20.5" lengthAdjust="spacingAndGlyphs">110%</text>
</svg></body></html>
